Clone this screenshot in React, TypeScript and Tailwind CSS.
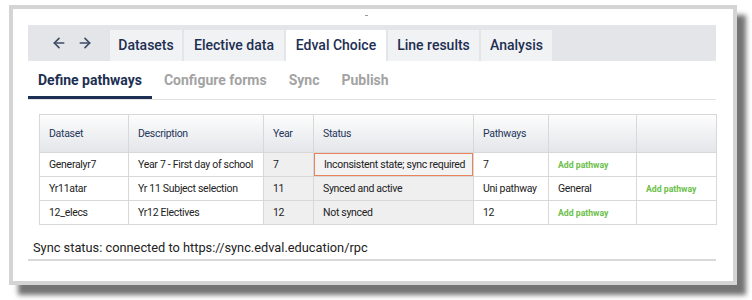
import React from "react";
import { ArrowLeft, ArrowRight } from "lucide-react";

const font = { fontFamily: 'Roboto, "Noto Sans", sans-serif' };

const tabs = [
  { label: "Datasets", w: "w-[72px]" },
  { label: "Elective data", w: "w-[100px]" },
  { label: "Edval Choice", w: "w-[100px]", active: true },
  { label: "Line results", w: "w-[91px]" },
  { label: "Analysis", w: "w-[71px]" },
];
const subTabs = ["Define pathways", "Configure forms", "Sync", "Publish"];

type Row = {
  dataset: string;
  description: string;
  year: string;
  status: string;
  pathways: string;
  extra?: string;
  warn?: boolean;
};

const rows: Row[] = [
  { dataset: "Generalyr7", description: "Year 7 - First day of school", year: "7", status: "Inconsistent state; sync required", pathways: "7", warn: true },
  { dataset: "Yr11atar", description: "Yr 11 Subject selection", year: "11", status: "Synced and active", pathways: "Uni pathway", extra: "General" },
  { dataset: "12_elecs", description: "Yr12 Electives", year: "12", status: "Not synced", pathways: "12" },
];

function AddPathway() {
  return <span className="text-[8.7px] font-bold text-[#6cc04a] whitespace-nowrap tracking-normal">Add pathway</span>;
}

export default function App() {
  return (
    <div className="w-[752px] h-[300px] bg-white pt-[5px] pl-[9px]" style={font}>
      <div className="relative w-[728px] h-[280px] bg-white border-4 border-[#d4d4d4] shadow-[9px_10px_5px_rgba(0,0,0,0.55)] pt-[16px] pl-[15px] pr-[17px]">
        {/* tiny mark at top */}
        <div className="absolute left-[352px] top-[6px] w-[3px] h-[1px] bg-[#9a9a9a]" />

        {/* Main tab bar */}
        <div className="flex items-end h-[36px] bg-[#e3e5e9]">
          <div className="flex items-center justify-center gap-[10px] w-[82px] h-full text-[#3d4b66] pl-[6px]">
            <ArrowLeft size={16} strokeWidth={2.5} />
            <ArrowRight size={16} strokeWidth={2.5} />
          </div>
          <div className="flex gap-[2px] h-[31px]">
            {tabs.map((t) => (
              <div
                key={t.label}
                className={
                  "flex items-center justify-center text-[14px] font-medium text-[#1d2f52] " +
                  t.w +
                  (t.active ? " bg-white" : " bg-[#f1f2f4]")
                }
              >
                {t.label}
              </div>
            ))}
          </div>
        </div>

        {/* Sub tabs */}
        <div className="flex h-[39px] border-b border-[#e2e2e2]">
          {subTabs.map((t, i) => (
            <div
              key={t}
              className={
                "flex items-center px-[10px] text-[14px] font-bold " +
                (i === 0 ? "text-[#1d2f52] border-b-[3px] border-[#1d2f52] pt-[3px] mr-[2px]" : "text-[#a3a3a3] mr-[2px]")
              }
            >
              {t}
            </div>
          ))}
        </div>

        {/* Table */}
        <div className="pl-[11px] pt-[14px]">
          <table className="w-[677px] border-collapse text-[10.5px] tracking-[-0.3px] text-[#222] table-fixed">
            <colgroup>
              <col className="w-[89px]" />
              <col className="w-[135px]" />
              <col className="w-[50px]" />
              <col className="w-[160px]" />
              <col className="w-[75px]" />
              <col className="w-[88px]" />
              <col className="w-[80px]" />
            </colgroup>
            <thead>
              <tr className="h-[38px] bg-gradient-to-b from-[#fdfdfd] to-[#e3e5e9]">
                {["Dataset", "Description", "Year", "Status", "Pathways", "", ""].map((h, i) => (
                  <th key={i} className="border border-[#d8d8d8] text-left font-normal text-[#24365a] px-[9px]">
                    {h}
                  </th>
                ))}
              </tr>
            </thead>
            <tbody>
              {rows.map((r) => (
                <tr key={r.dataset} className="h-[24px]">
                  <td className="border border-[#d8d8d8] px-[9px] whitespace-nowrap">{r.dataset}</td>
                  <td className="border border-[#d8d8d8] px-[9px] whitespace-nowrap">{r.description}</td>
                  <td className="border border-[#d8d8d8] px-[9px] bg-[#efeff0]">{r.year}</td>
                  <td className="border border-[#d8d8d8] bg-[#efeff0] p-0">
                    <div
                      className={
                        "h-[23px] flex items-center px-[9px] whitespace-nowrap " +
                        (r.warn ? "border border-[#e9835b] bg-[#f3f3f4]" : "")
                      }
                    >
                      {r.status}
                    </div>
                  </td>
                  <td className="border border-[#d8d8d8] px-[9px] whitespace-nowrap">{r.pathways}</td>
                  <td className="border border-[#d8d8d8] px-[9px]">{r.extra ? r.extra : <AddPathway />}</td>
                  <td className="border border-[#d8d8d8] px-[9px]">{r.extra ? <AddPathway /> : null}</td>
                </tr>
              ))}
            </tbody>
          </table>
        </div>

        {/* Footer */}
        <div className="pl-[5px] pt-[14px] text-[12.8px] leading-[18px] text-[#222]">
          Sync status: connected to https://sync.edval.education/rpc
        </div>
        <div className="mt-[2px] h-[2px] bg-[#d9d9d9]" />
      </div>
    </div>
  );
}
